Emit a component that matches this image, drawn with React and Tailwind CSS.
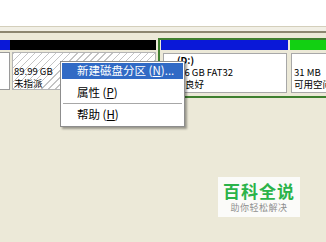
import React from "react";

const cjk = { fontFamily: '"Noto Sans CJK SC", "Liberation Sans", sans-serif' };

export default function App() {
  return (
    <div
      className="relative w-[326px] h-[242px] overflow-hidden bg-[#ece9d8] flex flex-col"
      style={cjk}
    >
      {/* list area */}
      <div className="h-[26px] bg-white shrink-0" />
      {/* splitter */}
      <div className="h-[1px] bg-[#d4cfbb] shrink-0" />
      <div className="h-[4px] bg-[#f1efe5] shrink-0" />
      <div className="h-[2px] bg-[#8c8670] shrink-0" />
      <div className="h-[5px] bg-[#ece9d8] shrink-0" />

      {/* disk row */}
      <div className="flex items-start shrink-0 w-[326px]">
        {/* col 1 */}
        <div className="w-[10px] shrink-0 flex flex-col pt-[2px]">
          <div className="h-[10px] bg-[#0a18d8]" />
          <div className="mt-[2px] h-[38px] bg-white border-r border-y border-[#9a9a9a]" />
        </div>
        {/* col 2 unallocated */}
        <div className="w-[146px] shrink-0 flex flex-col pt-[2px]">
          <div className="h-[10px] bg-black" />
          <div className="mt-[2px] ml-[2px] h-[38px] border border-[#b5b5b5] bg-[repeating-linear-gradient(135deg,#c4c4c4_0px,#c4c4c4_1px,#ffffff_1px,#ffffff_5px)] pl-[1px] pt-[12px] text-[9.5px] leading-[12px] text-black">
            <div className="whitespace-nowrap">89.99 GB</div>
            <div className="whitespace-nowrap">未指派</div>
          </div>
        </div>
        <div className="w-[2px] shrink-0" />
        {/* extended partition */}
        <div className="flex-1 min-w-0 overflow-hidden border-l-2 border-t-2 border-b-2 border-[#3f7f2f] pl-[1px] flex gap-[2px] h-[60px]">
          <div className="w-[127px] shrink-0 flex flex-col">
            <div className="h-[10px] bg-[#0a18d8]" />
            <div className="mt-[3px] mr-[1px] ml-[2px] h-[40px] bg-white border border-[#a8a8a8] pl-[2px] text-[9.5px] leading-[12px] text-black">
              <div className="whitespace-nowrap font-bold pl-[11px]">(D:)</div>
              <div className="whitespace-nowrap">19.96 GB FAT32</div>
              <div className="whitespace-nowrap">状态良好</div>
            </div>
          </div>
          <div className="flex-1 min-w-0 flex flex-col">
            <div className="h-[10px] bg-[#12d012]" />
            <div className="mt-[3px] ml-[1px] h-[40px] bg-white border-y border-l border-[#a8a8a8] pl-[2px] pt-[12px] text-[9.5px] leading-[12px] text-black overflow-hidden">
              <div className="whitespace-nowrap">31 MB</div>
              <div className="whitespace-nowrap">可用空间</div>
            </div>
          </div>
        </div>
      </div>

      {/* context menu */}
      <div className="absolute left-[60px] top-[61px] w-[125px] h-[66px] bg-white border border-[#8d8d8d] p-[1px] shadow-[2px_2px_2px_rgba(0,0,0,0.35)] text-[11.5px] text-black">
        <div className="h-[16px] bg-[#316ac5] text-white pl-[15px] flex items-center whitespace-nowrap">
          新建磁盘分区 (<span className="underline">N</span>)...
        </div>
        <div className="h-[6px]" />
        <div className="h-[16px] pl-[15px] flex items-center whitespace-nowrap">
          属性 (<span className="underline">P</span>)
        </div>
        <div className="h-[5px] flex items-center px-[1px]">
          <div className="h-[1px] w-full bg-[#a7a7a7]" />
        </div>
        <div className="h-[17px] pl-[15px] flex items-center whitespace-nowrap">
          帮助 (<span className="underline">H</span>)
        </div>
      </div>

      {/* watermark */}
      <div className="absolute left-[218px] top-[177px] w-[82px] h-[40px] bg-[#fbfbf9] flex flex-col items-center justify-center">
        <div className="text-[17px] leading-[18px] font-bold text-[#2bb34a] tracking-[1px]">百科全说</div>
        <div className="text-[9px] leading-[11px] text-[#8f8f8f] mt-[2px] tracking-[0.5px]">助你轻松解决</div>
      </div>
    </div>
  );
}
